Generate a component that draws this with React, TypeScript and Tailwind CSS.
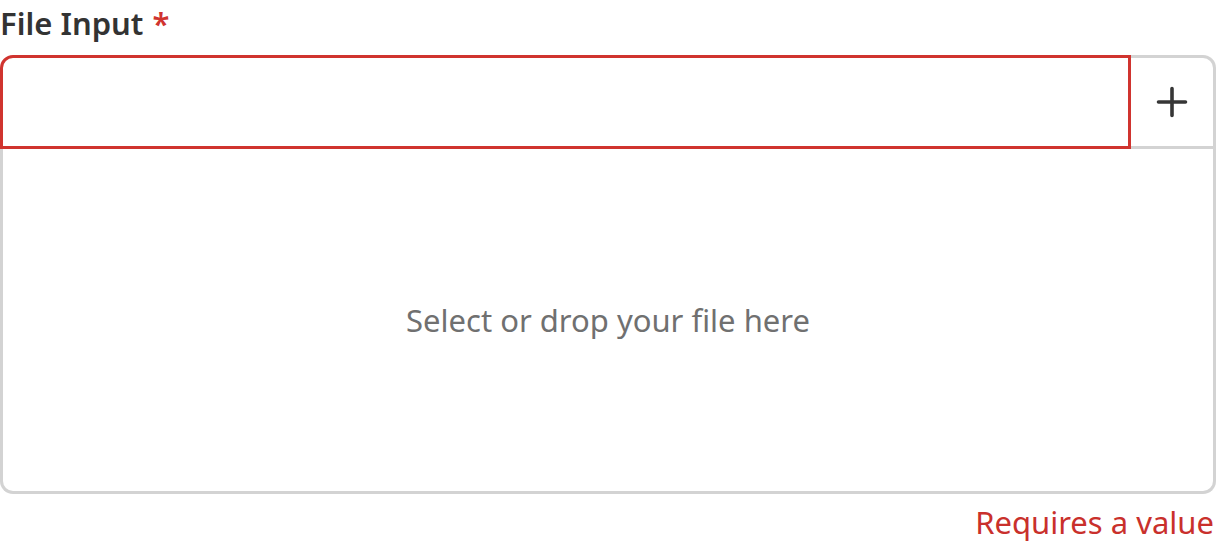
import React from "react";

export default function App() {
  return (
    <div className="w-[1216px] h-[548px] bg-white" style={{ fontFamily: '"Noto Sans", "Open Sans", sans-serif' }}>
      <div className="flex items-center h-[46px] text-[31px] font-semibold text-[#333333] leading-none">
        <span>File Input</span>
        <span className="ml-[9px] text-[#d0342f]">*</span>
      </div>
      <div className="mt-[9px] flex flex-col">
        <div className="flex h-[94px]">
          <div className="flex-1 border-[3px] border-[#d0342f] rounded-tl-[13px]"></div>
          <button className="w-[85px] flex items-center justify-center border-t-[3px] border-r-[3px] border-b-[3px] border-[#d3d3d3] rounded-tr-[13px]">
            <svg width="32" height="32" viewBox="0 0 32 32">
              <path d="M16 2.5v27M2.5 16h27" stroke="#363636" strokeWidth="3.6" strokeLinecap="round" />
            </svg>
          </button>
        </div>
        <div className="h-[345px] flex items-center justify-center border-l-[3px] border-r-[3px] border-b-[3px] border-[#d3d3d3] rounded-b-[13px] text-[31px] text-[#707070]">
          Select or drop your file here
        </div>
      </div>
      <div className="mt-[6px] text-right text-[31px] text-[#c9302c] leading-[44px] pr-[2px]">
        Requires a value
      </div>
    </div>
  );
}
